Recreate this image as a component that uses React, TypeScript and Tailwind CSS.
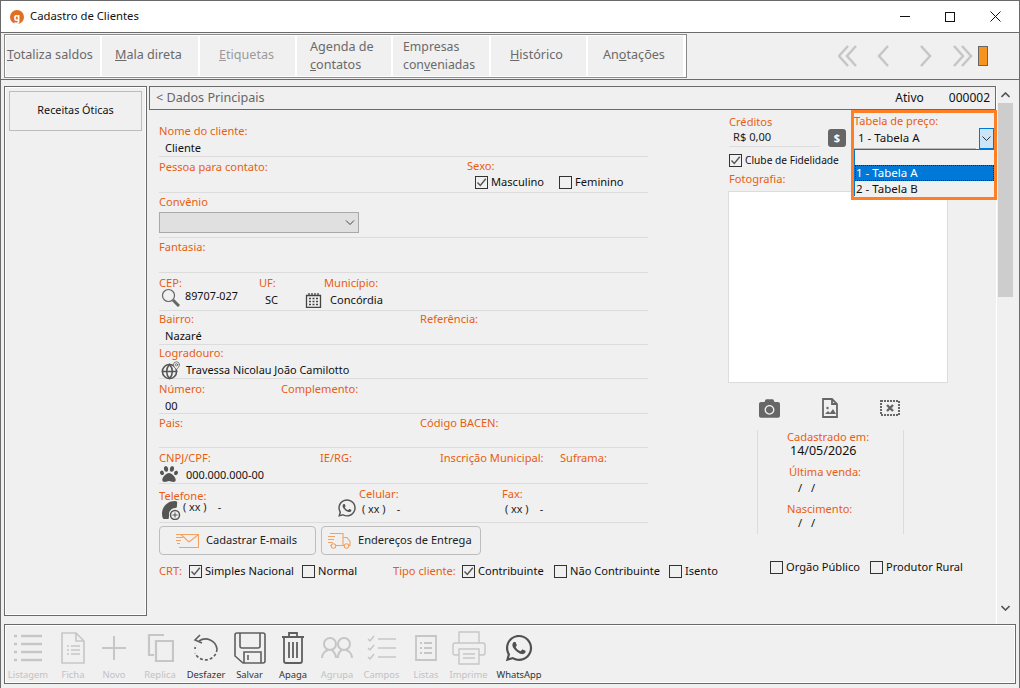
import { Globe, MapPin } from "lucide-react";
import { FaCamera, FaPaw, FaWhatsapp } from "react-icons/fa";
import type { ReactNode } from "react";

const label = "text-[#e85d12] leading-[14px]";
const value = "text-[#111] leading-[14px]";

function Check({ checked = false }: { checked?: boolean }) {
  return (
    <span className="w-[13px] h-[13px] border border-[#333] flex items-center justify-center shrink-0">
      {checked && (
        <svg width="11" height="11" viewBox="0 0 11 11" fill="none" stroke="#555" strokeWidth="1.4">
          <path d="M1.5 5.5 4.3 8.5 9.8 1.8" />
        </svg>
      )}
    </span>
  );
}

function CheckLabel({ text, checked, className }: { text: string; checked?: boolean; className?: string }) {
  return (
    <div className={"flex items-center gap-[3px] text-[#111] leading-[14px] " + (className ?? "")}>
      <Check checked={checked} />
      <span>{text}</span>
    </div>
  );
}

function Row({ h, children }: { h: string; children: ReactNode }) {
  return <div className={"w-[489px] border-b border-[#dcdcdc] pt-[2px] " + h}>{children}</div>;
}

function TopButton({ w, dim, children }: { w: string; dim?: boolean; children: ReactNode }) {
  return (
    <div
      className={
        "h-full flex items-center pb-[2px] border-r-2 border-white text-[12.6px] leading-[18px] " +
        w +
        (dim ? " text-[#9b9b9b]" : " text-[#6a6a6a]")
      }
    >
      {children}
    </div>
  );
}

function Tool({ w, name, off, children }: { w: string; name: string; off?: boolean; children: ReactNode }) {
  return (
    <div className={"flex flex-col items-center h-full pt-[4px] " + w}>
      <div className="h-[38px] flex items-center justify-center">{children}</div>
      <span className={"text-[9.4px] leading-[14px] mt-px " + (off ? "text-[#c2c2c2]" : "text-[#333]")}>{name}</span>
    </div>
  );
}

const off = "#c6c6c6";
const on = "#5f5f5f";

function Dates() {
  return (
    <div className="w-[147px] h-[104px] border-x border-[#dcdcdc] mt-[10px] ml-[29px] pl-[29px] flex flex-col">
      <span className={label}>Cadastrado em:</span>
      <span className={value + " pl-[3px] text-[12.5px]"}>14/05/2026</span>
      <span className={label + " mt-[7px] pl-[2px]"}>Última venda:</span>
      <span className={value + " pl-[11px] mt-[2px] tracking-[3px]"}>/ /</span>
      <span className={label + " mt-[7px]"}>Nascimento:</span>
      <span className={value + " pl-[11px] tracking-[3px]"}>/ /</span>
    </div>
  );
}

export default function App() {
  return (
    <div className="w-[1020px] h-[688px] overflow-hidden flex flex-col bg-[#f0f0f0] border border-[#6a6a6a] border-b-0 text-[11.1px] [font-family:'Noto_Sans',sans-serif]">
      {/* title bar */}
      <div className="h-[31px] bg-white flex items-center shrink-0 pl-[9px]">
        <span className="w-[14px] h-[14px] rounded-full bg-[#e0701f] text-white text-[10px] font-bold flex items-center justify-center leading-none">
          g
        </span>
        <span className="ml-[6px] text-[11.3px] text-[#111]">Cadastro de Clientes</span>
        <div className="ml-auto flex items-center">
          <span className="w-[10px] h-px bg-[#111] mr-[35px]" />
          <span className="w-[10px] h-[10px] border border-[#111] mr-[35px]" />
          <svg width="11" height="11" viewBox="0 0 11 11" stroke="#111" className="mr-[18px]">
            <path d="M.5.5l10 10M10.5.5l-10 10" />
          </svg>
        </div>
      </div>

      {/* top toolbar */}
      <div className="h-[48px] shrink-0 border-y border-[#6a6a6a] flex items-center pl-[3px]">
        <div className="w-[683px] h-[44px] border border-[#8a8a8a] flex pl-[2px] shadow-[inset_0_0_0_1px_#fff]">
          <TopButton w="w-[95px]">
            <span><u>T</u>otaliza saldos</span>
          </TopButton>
          <TopButton w="w-[98px] pl-[13px]">
            <span><u>M</u>ala direta</span>
          </TopButton>
          <TopButton w="w-[97px] pl-[19px]" dim>
            <span><u>E</u>tiquetas</span>
          </TopButton>
          <TopButton w="w-[96px] pl-[13px]">
            <span className="mt-[2px]">Agenda de<br /><u>c</u>ontatos</span>
          </TopButton>
          <TopButton w="w-[98px] pl-[10px]">
            <span className="mt-[2px] text-[12.3px]">Empresas<br />con<u>v</u>eniadas</span>
          </TopButton>
          <TopButton w="w-[97px] pl-[19px]">
            <span><u>H</u>istórico</span>
          </TopButton>
          <TopButton w="w-[97px] pl-[15px]">
            <span>An<u>o</u>tações</span>
          </TopButton>
        </div>
        <svg width="140" height="22" viewBox="0 0 140 22" fill="none" stroke="#c6c6c6" strokeWidth="2.5" className="ml-[151px] shrink-0">
          <path d="M10 1 1 11l9 10M18 1 9 11l9 10M50 1 41 11l9 10M83 1l9 10-9 10M116 1l9 10-9 10M124 1l9 10-9 10" />
        </svg>
        <span className="w-[10px] h-[20px] bg-[#f7941d] border border-[#666] shrink-0" />
      </div>

      {/* body */}
      <div className="h-[544px] shrink-0 flex pt-[6px] pl-[3px] pr-[3px]">
        <div className="w-[143px] h-[530px] border border-[#6a6a6a] shrink-0 p-[4px] shadow-[inset_0_0_0_1px_#fff]">
          <div className="h-[40px] pb-[2px] border border-[#bdbdbd] flex items-center justify-center text-[#111] text-[10.8px]">
            Receitas Óticas
          </div>
        </div>

        <div className="relative w-[848px] ml-[2px] shrink-0 border-r border-white">
          <div className="h-[24px] border border-[#6a6a6a] flex items-center pl-[6px] pr-[5px] text-[#111]">
            <span className="text-[12.6px] text-[#666]">&lt; Dados Principais</span>
            <span className="ml-auto text-[12px]">Ativo</span>
            <span className="ml-[25px] text-[12px]">000002</span>
          </div>

          <div className="flex">
            {/* left form */}
            <div className="w-[579px] shrink-0 pl-[10px] pt-[12px]">
              <Row h="h-[35px]">
                <p className={label}>Nome do cliente:</p>
                <p className={value + " pl-[6px] mt-[3px]"}>Cliente</p>
              </Row>
              <Row h="h-[36px]">
                <div className="flex">
                  <p className={label + " w-[308px] mt-[1px]"}>Pessoa para contato:</p>
                  <div>
                    <p className={label}>Sexo:</p>
                    <div className="flex pl-[8px] mt-[2px]">
                      <CheckLabel text="Masculino" checked className="w-[84px]" />
                      <CheckLabel text="Feminino" />
                    </div>
                  </div>
                </div>
              </Row>
              <Row h="h-[45px]">
                <p className={label}>Convênio</p>
                <div className="mt-[3px] w-[200px] h-[21px] bg-[#e0e0e0] border border-[#a9a9a9] flex items-center justify-end pr-[3px]">
                  <svg width="10" height="6" viewBox="0 0 10 6" fill="none" stroke="#444">
                    <path d="M1 .5 5 4.5 9 .5" />
                  </svg>
                </div>
              </Row>
              <Row h="h-[35px]">
                <p className={label}>Fantasia:</p>
              </Row>
              <Row h="h-[38px]">
                <div className="flex mt-px">
                  <div className="w-[100px]">
                    <p className={label}>CEP:</p>
                    <div className="flex items-center h-[18px] -mt-[3px]">
                      <svg width="19" height="19" viewBox="0 0 19 19" fill="none" stroke="#666" className="ml-[2px] mt-[3px] shrink-0">
                        <circle cx="7.5" cy="7.5" r="6" strokeWidth="1.2" />
                        <path d="M12 12l6 6" strokeWidth="3" />
                      </svg>
                      <span className="ml-[5px] text-[#111] text-[10.8px] whitespace-nowrap">89707-027</span>
                    </div>
                  </div>
                  <div className="w-[65px]">
                    <p className={label}>UF:</p>
                    <p className={value + " pl-[6px] mt-[3px]"}>SC</p>
                  </div>
                  <div>
                    <p className={label}>Município:</p>
                    <div className="flex items-center -ml-[19px] h-[18px] mt-px">
                      <svg width="17" height="17" viewBox="0 0 17 17" fill="none" stroke="#444" className="-mt-[2px]">
                        <path d="M1.5 4.5h14v12h-14zM4 4V2M7 4V2M10 4V2M13 4V2" strokeWidth="1.3" />
                        <path d="M4 7.5h2M7.5 7.5h2M11 7.5h2M4 10.5h2M7.5 10.5h2M11 10.5h2M4 13.5h2M7.5 13.5h2M11 13.5h2" strokeWidth="1.6" />
                      </svg>
                      <span className="ml-[8px] text-[#111]">Concórdia</span>
                    </div>
                  </div>
                </div>
              </Row>
              <Row h="h-[34px]">
                <div className="flex -mt-px">
                  <p className={label + " w-[261px]"}>Bairro:</p>
                  <p className={label}>Referência:</p>
                </div>
                <p className={value + " pl-[6px] mt-[3px]"}>Nazaré</p>
              </Row>
              <Row h="h-[34px]">
                <p className={label + " -mt-px"}>Logradouro:</p>
                <div className="flex items-center h-[18px] mt-px">
                  <span className="relative w-[20px] h-[18px] ml-[2px] shrink-0">
                    <Globe size={17} color="#555" strokeWidth={2.2} className="mt-[2px]" />
                    <MapPin size={9} color="#555" fill="#f0f0f0" className="absolute right-0 top-0" />
                  </span>
                  <span className="ml-[5px] text-[#111] text-[10.9px]">Travessa Nicolau João Camilotto</span>
                </div>
              </Row>
              <Row h="h-[35px]">
                <div className="flex mt-[1px]">
                  <p className={label + " w-[122px]"}>Número:</p>
                  <p className={label}>Complemento:</p>
                </div>
                <p className={value + " pl-[6px] mt-[3px]"}>00</p>
              </Row>
              <Row h="h-[34px]">
                <div className="flex">
                  <p className={label + " w-[261px]"}>Pais:</p>
                  <p className={label}>Código BACEN:</p>
                </div>
              </Row>
              <Row h="h-[36px]">
                <div className="flex mt-[1px]">
                  <p className={label + " w-[161px]"}>CNPJ/CPF:</p>
                  <p className={label + " w-[120px]"}>IE/RG:</p>
                  <p className={label + " w-[120px]"}>Inscrição Municipal:</p>
                  <p className={label}>Suframa:</p>
                </div>
                <div className="flex items-center h-[18px] ml-[1px] mt-px">
                  <FaPaw size={18} color="#555" className="-mt-[3px]" />
                  <span className="ml-[8px] text-[#111] text-[10.9px]">000.000.000-00</span>
                </div>
              </Row>
              <Row h="h-[39px]">
                <div className="flex">
                  <div className="w-[178px] mt-[5px]">
                    <p className="text-[#e85d12] leading-[10px]">Telefone:</p>
                    <div className="flex">
                      <svg width="20" height="20" viewBox="0 0 20 20" fill="#555" className="ml-[2px] -mt-px">
                        <path d="M14 1C7 1 1 6 1 14c0 3 1 5 2 5h4c1 0 1-2 1-5 0-3 3-6 6-6 2 0 2-1 2-3s1-4-2-4z" />
                        <circle cx="14" cy="15" r="4.5" fill="#f0f0f0" stroke="#555" strokeWidth="1.5" />
                        <path d="M14 12.5v5M11.5 15h5" stroke="#555" />
                      </svg>
                      <span className="ml-[2px] mt-px text-[#222] text-[10.8px] leading-[10px] whitespace-pre">{"( xx )    -"}</span>
                    </div>
                  </div>
                  <FaWhatsapp size={20} color="#555" className="mt-[12px]" />
                  <div className="w-[143px] ml-[2px] mt-[1px]">
                    <p className={label}>Celular:</p>
                    <p className="text-[#222] text-[10.8px] leading-[14px] whitespace-pre mt-[1px] pl-[3px]">{"( xx )    -"}</p>
                  </div>
                  <div className="mt-[1px]">
                    <p className={label}>Fax:</p>
                    <p className="text-[#222] text-[10.8px] leading-[14px] whitespace-pre mt-[1px] pl-[3px]">{"( xx )    -"}</p>
                  </div>
                </div>
              </Row>
              <div className="flex gap-[5px] mt-[3px] text-[#222]">
                <div className="w-[157px] h-[29px] border border-[#bdbdbd] rounded-[4px] flex items-center pl-[15px]">
                  <svg width="24" height="14" viewBox="0 0 24 14" fill="none" stroke="#f5a261" strokeWidth="1.1" className="shrink-0">
                    <path d="M1 .5h22.5v13H4M23.5.5 14 8 6 .5M1 3.5h7M1 6.5h5M2 9.5h3" />
                  </svg>
                  <span className="ml-[7px]">Cadastrar E-mails</span>
                </div>
                <div className="w-[160px] h-[29px] border border-[#bdbdbd] rounded-[4px] flex items-center pl-[4px]">
                  <svg width="24" height="16" viewBox="0 0 24 16" fill="none" stroke="#f5a261" strokeWidth="1.1" className="shrink-0 ml-[1px]">
                    <path d="M3 .5h13v12H9M16 4.5h4l3 4v4h-2M16 12.5h2M3 12.5h1M1 3.5h7M1 6.5h6M1 9.5h5" />
                    <circle cx="6.5" cy="13" r="2.2" />
                    <circle cx="19.5" cy="13" r="2.2" />
                  </svg>
                  <span className="ml-[7px]">Endereços de Entrega</span>
                </div>
              </div>
              <div className="flex items-center mt-[9px] h-[14px]">
                <span className={label + " w-[30px]"}>CRT:</span>
                <CheckLabel text="Simples Nacional" checked className="w-[113px]" />
                <CheckLabel text="Normal" className="w-[91px]" />
                <span className={label + " w-[69px]"}>Tipo cliente:</span>
                <CheckLabel text="Contribuinte" checked className="w-[92px]" />
                <CheckLabel text="Não Contribuinte" className="w-[115px]" />
                <CheckLabel text="Isento" />
              </div>
            </div>

            {/* right column */}
            <div className="flex-1 pt-[5px]">
              <p className={label + " pl-px"}>Créditos</p>
              <div className="flex mt-[1px] pl-px">
                <p className="w-[91px] h-[17px] border-b border-[#dcdcdc] pl-[4px] text-[#222] leading-[14px]">R$ 0,00</p>
                <span className="ml-[8px] -mt-[1px] w-[18px] h-[18px] rounded-[3px] bg-[#666] text-white font-bold text-[11px] flex items-center justify-center">
                  $
                </span>
              </div>
              <CheckLabel text="Clube de Fidelidade" checked className="mt-[6px] pl-px text-[10.2px]" />
              <p className={label + " mt-[5px] pl-px"}>Fotografia:</p>
              <div className="mt-[5px] w-[220px] h-[192px] bg-white border border-[#dcdcdc]" />
              <div className="flex items-center h-[24px] mt-[13px] pl-[31px]">
                <FaCamera size={21} color="#666" />
                <svg width="18" height="20" viewBox="0 0 18 20" fill="none" stroke="#666" strokeWidth="1.8" className="ml-[41px]">
                  <path d="M2 1h9l5 5v13H2zM11 1v5h5" />
                  <circle cx="6.5" cy="10" r="1.2" fill="#666" stroke="none" />
                  <path d="M4 16l3-3 2 2 3-4 3 5z" fill="#666" stroke="none" />
                </svg>
                <svg width="20" height="18" viewBox="0 0 20 18" fill="none" stroke="#666" className="ml-[41px]">
                  <rect x="1" y="2" width="18" height="14" strokeWidth="2" strokeDasharray="2 1" />
                  <path d="M7 6l6 6M13 6l-6 6" strokeWidth="2.4" />
                </svg>
              </div>
              <Dates />
              <div className="flex mt-[26px] pl-[42px]">
                <CheckLabel text="Orgão Público" className="w-[100px]" />
                <CheckLabel text="Produtor Rural" />
              </div>
            </div>
          </div>

          {/* open combo */}
          <div className="absolute left-[702px] top-[24px] w-[146px] h-[90px] border-[3px] border-[#ff7f27] bg-[#f0f0f0] text-[11.5px]">
            <p className="text-[#e85d12] text-[11px] leading-[14px] pt-px">Tabela de preço:</p>
            <div className="flex h-[21px]">
              <div className="w-[122px] border-b border-[#bbb] pl-[4px] text-[#111] leading-[20px]">1 - Tabela A</div>
              <div className="ml-[3px] w-[15px] bg-[#cce4f7] border border-[#0078d7] flex items-center justify-center">
                <svg width="9" height="5" viewBox="0 0 9 5" fill="none" stroke="#333">
                  <path d="M.5.5l4 4 4-4" />
                </svg>
              </div>
            </div>
            <div className="border-t border-l border-[#0078d7] pt-[15px] text-[#111]">
              <div className="h-[16px] bg-[#0078d7] text-white leading-[15px] pl-px outline-1 outline-dotted outline-[#222] -outline-offset-1">
                1 - Tabela A
              </div>
              <div className="h-[15px] leading-[15px] pl-px">2 - Tabela B</div>
            </div>
          </div>
        </div>

        {/* scrollbar */}
        <div className="w-[15px] ml-[1px] h-[530px] flex flex-col items-center shrink-0">
          <div className="h-[17px] flex items-center">
            <svg width="9" height="6" viewBox="0 0 9 6" fill="none" stroke="#555" strokeWidth="1.6">
              <path d="M.5 5l4-4 4 4" />
            </svg>
          </div>
          <div className="w-full h-[194px] bg-[#cdcdcd]" />
          <div className="mt-auto h-[17px] flex items-center">
            <svg width="9" height="6" viewBox="0 0 9 6" fill="none" stroke="#555" strokeWidth="1.6">
              <path d="M.5 1l4 4 4-4" />
            </svg>
          </div>
        </div>
      </div>

      {/* bottom toolbar */}
      <div className="ml-[3px] mr-[3px] h-[60px] shrink-0 border border-[#6a6a6a] flex shadow-[inset_0_0_0_1px_#fff]">
        <Tool w="w-[46px]" name="Listagem" off>
          <svg width="30" height="30" viewBox="0 0 30 30" stroke={off} strokeWidth="2.6">
            <path d="M1 3h3M8 3h21M1 11h3M8 11h21M1 19h3M8 19h21M1 27h3M8 27h21" />
          </svg>
        </Tool>
        <Tool w="w-[44px]" name="Ficha" off>
          <svg width="24" height="32" viewBox="0 0 24 32" fill="none" stroke={off} strokeWidth="1.6">
            <path d="M1 1h14l8 8v22H1zM15 1v8h8M6 14h2M10 14h9M6 18h2M10 18h9M6 22h2M10 22h9" />
          </svg>
        </Tool>
        <Tool w="w-[38px]" name="Novo" off>
          <svg width="26" height="26" viewBox="0 0 26 26" stroke={off} strokeWidth="2">
            <path d="M13 1v24M1 13h24" />
          </svg>
        </Tool>
        <Tool w="w-[51px] pl-[3px]" name="Replica" off>
          <svg width="27" height="28" viewBox="0 0 27 28" fill="none" stroke={off} strokeWidth="2.2">
            <path d="M17 1H2v20h5M9 7h17v20H9z" />
          </svg>
        </Tool>
        <Tool w="w-[44px]" name="Desfazer">
          <svg width="26" height="28" viewBox="0 0 26 28" fill="none" stroke={on} strokeWidth="1.6">
            <path d="M6 7a11.5 11.5 0 0 1 18 8" />
            <path d="M24 15a11.5 11.5 0 0 1-22 4" strokeDasharray="3 2" />
            <path d="M2 15a11 11 0 0 1 1-4" strokeDasharray="2 2" />
            <path d="M7 1 2 6l7 3" />
          </svg>
        </Tool>
        <Tool w="w-[43px]" name="Salvar">
          <svg width="32" height="32" viewBox="0 0 32 32" fill="none" stroke={on} strokeWidth="1.6">
            <path d="M3 1h26a2 2 0 0 1 2 2v26a2 2 0 0 1-2 2H9l-8-7V3a2 2 0 0 1 2-2z" />
            <path d="M6 1v13a2 2 0 0 0 2 2h16a2 2 0 0 0 2-2V1M10 31V20h17v11M14 23v5" />
          </svg>
        </Tool>
        <Tool w="w-[44px]" name="Apaga">
          <svg width="24" height="32" viewBox="0 0 24 32" fill="none" stroke={on} strokeWidth="1.8">
            <path d="M1 5h22M8 5V1h8v4M3 5v24a2 2 0 0 0 2 2h14a2 2 0 0 0 2-2V5M8 10v16M12 10v16M16 10v16" />
          </svg>
        </Tool>
        <Tool w="w-[44px]" name="Agrupa" off>
          <svg width="32" height="22" viewBox="0 0 32 22" fill="none" stroke={off} strokeWidth="2">
            <circle cx="9" cy="7" r="6" />
            <circle cx="23" cy="7" r="6" />
            <path d="M1 21c0-4 3-7 6-8M15 21c0-4-2-6-4-8M17 21c0-4 2-7 4-8M31 21c0-4-3-7-6-8" />
          </svg>
        </Tool>
        <Tool w="w-[45px]" name="Campos" off>
          <svg width="30" height="26" viewBox="0 0 30 26" fill="none" stroke={off} strokeWidth="1.5">
            <path d="M1 4l2 2 4-5M1 13l2 2 4-5M1 22l2 2 4-5M11 4h18M11 13h18M11 22h18" />
          </svg>
        </Tool>
        <Tool w="w-[44px]" name="Listas" off>
          <svg width="22" height="26" viewBox="0 0 22 26" fill="none" stroke={off} strokeWidth="1.8">
            <path d="M1 1h20v24H1zM5 8h2M9 8h8M5 13h2M9 13h8M5 18h2M9 18h8" />
          </svg>
        </Tool>
        <Tool w="w-[41px]" name="Imprime" off>
          <svg width="34" height="34" viewBox="0 0 34 34" fill="none" stroke={off} strokeWidth="1.4" className="shrink-0">
            <path d="M7 12V1h20v11M7 24H3a2 2 0 0 1-2-2V14a2 2 0 0 1 2-2h28a2 2 0 0 1 2 2v8a2 2 0 0 1-2 2h-4M7 18h20v15H7zM11 23h12M11 27h12" />
          </svg>
        </Tool>
        <Tool w="w-[56px] pl-[4px]" name="WhatsApp">
          <FaWhatsapp size={30} color="#505050" />
        </Tool>
      </div>
    </div>
  );
}
